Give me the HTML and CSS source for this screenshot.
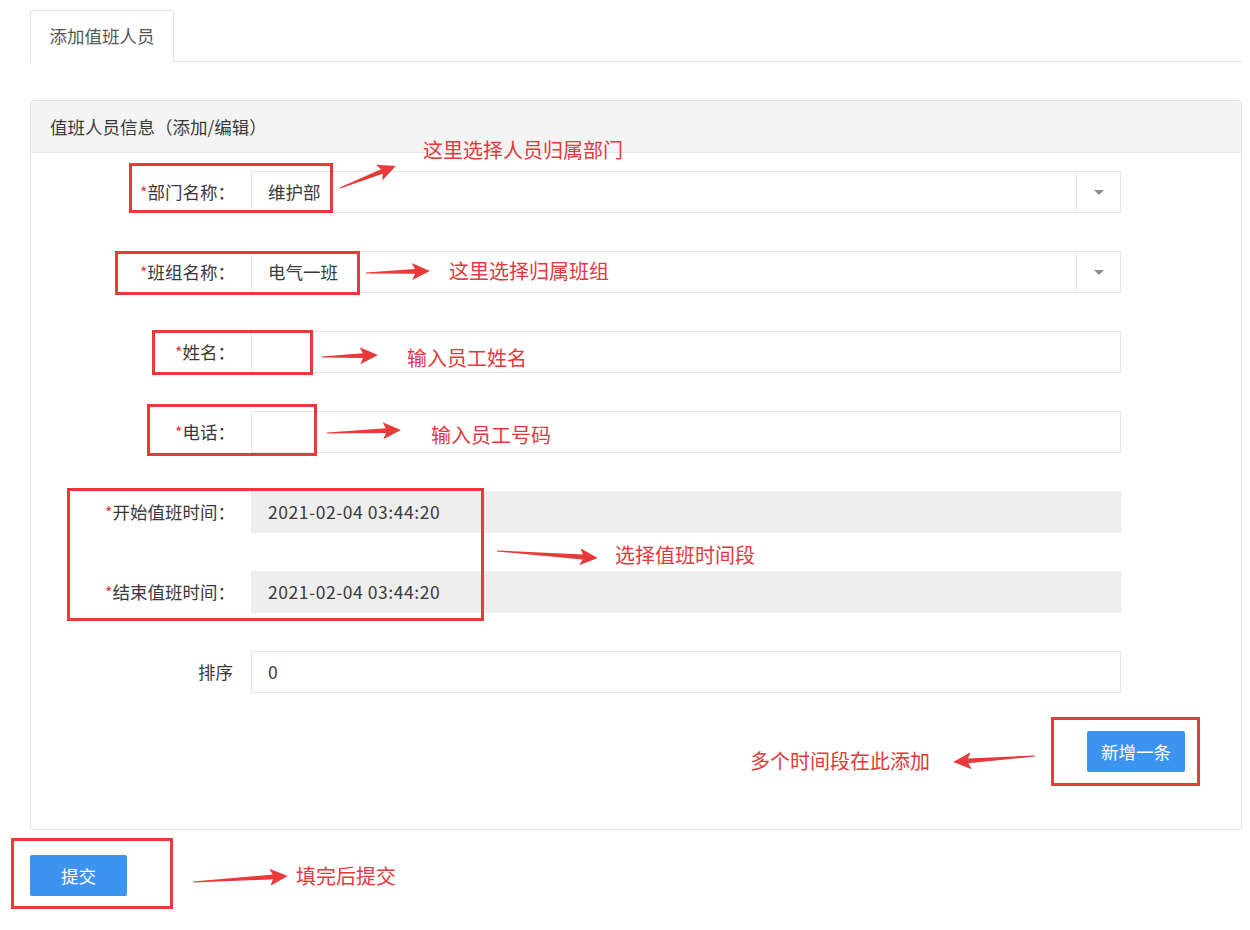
FILE: index.html
```html
<!DOCTYPE html>
<html lang="zh-CN">
<head>
<meta charset="utf-8">
<title>添加值班人员</title>
<link rel="stylesheet" href="styles.css">
</head>
<body>
<div class="page">
  <div class="tabs">
    <div class="tab">添加值班人员</div>
  </div>

  <div class="panel">
    <div class="panel-head">值班人员信息（添加/编辑）</div>
    <div class="panel-body">
      <div class="row">
        <div class="lbl"><span class="req">*</span>部门名称：</div>
        <div class="field select"><span class="val">维护部</span><span class="caret-box"><span class="caret"></span></span></div>
      </div>
      <div class="row">
        <div class="lbl"><span class="req">*</span>班组名称：</div>
        <div class="field select"><span class="val">电气一班</span><span class="caret-box"><span class="caret"></span></span></div>
      </div>
      <div class="row">
        <div class="lbl"><span class="req">*</span>姓名：</div>
        <div class="field"><span class="val"></span></div>
      </div>
      <div class="row">
        <div class="lbl"><span class="req">*</span>电话：</div>
        <div class="field"><span class="val"></span></div>
      </div>
      <div class="row">
        <div class="lbl"><span class="req">*</span>开始值班时间：</div>
        <div class="field readonly"><span class="val val-date">2021-02-04 03:44:20</span></div>
      </div>
      <div class="row">
        <div class="lbl"><span class="req">*</span>结束值班时间：</div>
        <div class="field readonly"><span class="val val-date">2021-02-04 03:44:20</span></div>
      </div>
      <div class="row">
        <div class="lbl lbl-plain">排序</div>
        <div class="field"><span class="val">0</span></div>
      </div>
      <div class="actions">
        <button class="btn btn-add">新增一条</button>
      </div>
    </div>
  </div>

  <div class="submit-row">
    <button class="btn btn-submit">提交</button>
  </div>

  <div class="notes">
    <div class="box box1"></div>
    <div class="box box2"></div>
    <div class="box box3"></div>
    <div class="box box4"></div>
    <div class="box box5"></div>
    <div class="box box6"></div>
    <div class="box box7"></div>

    <div class="note note1">这里选择人员归属部门</div>
    <div class="note note2">这里选择归属班组</div>
    <div class="note note3">输入员工姓名</div>
    <div class="note note4">输入员工号码</div>
    <div class="note note5">选择值班时间段</div>
    <div class="note note6">多个时间段在此添加</div>
    <div class="note note7">填完后提交</div>

    <svg class="arrows" width="1250" height="930" viewBox="0 0 1250 930">
      <g fill="#e8393b">
        <path transform="translate(340,188) rotate(-21.4)" d="M0,-0.6 L45,-2.4 L42,-8.5 L60,0 L42,8.5 L45,2.4 L0,0.6 Z"/>
        <path transform="translate(366,273) rotate(-1.8)" d="M0,-0.6 L49,-2.4 L46,-8.5 L64,0 L46,8.5 L49,2.4 L0,0.6 Z"/>
        <path transform="translate(322,357) rotate(-2)" d="M0,-0.6 L41,-2.4 L38,-8.5 L56,0 L38,8.5 L41,2.4 L0,0.6 Z"/>
        <path transform="translate(327,433) rotate(-2.3)" d="M0,-0.6 L59,-2.4 L56,-8.5 L74,0 L56,8.5 L59,2.4 L0,0.6 Z"/>
        <path transform="translate(497,551) rotate(4)" d="M0,-0.6 L86,-2.4 L83,-8.5 L101,0 L83,8.5 L86,2.4 L0,0.6 Z"/>
        <path transform="translate(1035,756) rotate(175.8)" d="M0,-0.6 L67,-2.4 L64,-8.5 L82,0 L64,8.5 L67,2.4 L0,0.6 Z"/>
        <path transform="translate(193,882) rotate(-3.6)" d="M0,-0.6 L80,-2.4 L77,-8.5 L95,0 L77,8.5 L80,2.4 L0,0.6 Z"/>
      </g>
    </svg>
  </div>
</div>
</body>
</html>
```

FILE: styles.css
```css
* { box-sizing: border-box; }

html, body {
  margin: 0;
  padding: 0;
  background: #ffffff;
}

body {
  font-family: "Noto Sans CJK SC", "Noto Sans", "Liberation Sans", sans-serif;
  color: #333333;
  font-size: 17px;
}

.page {
  position: relative;
  width: 1250px;
  height: 930px;
  padding: 10px 8px 0 30px;
}

/* tabs */
.tabs {
  display: flex;
  border-bottom: 1px solid #e2e2e2;
  height: 52px;
}

.tab {
  width: 144px;
  height: 52px;
  border: 1px solid #e2e2e2;
  border-bottom: none;
  border-radius: 3px 3px 0 0;
  background: #ffffff;
  color: #555555;
  font-size: 17.5px;
  line-height: 50px;
  text-align: center;
  margin-bottom: -1px;
}

/* panel */
.panel {
  margin-top: 38px;
  border: 1px solid #e2e2e2;
  border-radius: 3px;
}

.panel-head {
  height: 52px;
  background: #f4f4f4;
  border-bottom: 1px solid #e6e6e6;
  padding-left: 19px;
  font-size: 17.5px;
  line-height: 51px;
  color: #383838;
}

.panel-body {
  padding: 18px 0 57px 0;
}

.row {
  display: flex;
  align-items: center;
  height: 42px;
  margin-bottom: 38px;
}

.lbl {
  width: 220px;
  padding-right: 16px;
  text-align: right;
  font-size: 17.5px;
  line-height: 42px;
  color: #383838;
  white-space: nowrap;
}

.lbl-plain {
  padding-right: 18px;
}

.req {
  color: #e4393c;
  font-size: 16px;
}

.field {
  display: flex;
  align-items: center;
  width: 870px;
  height: 42px;
  border: 1px solid #e6e6e6;
  background: #ffffff;
}

.field.readonly {
  background: #eeeeee;
  border-color: #eeeeee;
}

.val {
  flex: 1;
  padding-left: 16px;
  font-size: 17.5px;
  line-height: 40px;
  color: #3a3a3a;
}

.val-date {
  letter-spacing: 0.55px;
}

.caret-box {
  width: 44px;
  height: 40px;
  border-left: 1px solid #e6e6e6;
  display: flex;
  align-items: center;
  justify-content: center;
}

.caret {
  width: 0;
  height: 0;
  border-left: 5px solid transparent;
  border-right: 5px solid transparent;
  border-top: 5px solid #8e8e8e;
}

.actions {
  display: flex;
  justify-content: flex-end;
  padding-right: 56px;
}

.btn {
  border: none;
  border-radius: 2px;
  background: #3d94f0;
  color: #ffffff;
  font-family: "Noto Sans CJK SC", "Noto Sans", sans-serif;
  font-size: 17.5px;
  cursor: pointer;
  padding: 0;
}

.btn-add {
  width: 98px;
  height: 41px;
}

.submit-row {
  margin-top: 25px;
}

.btn-submit {
  width: 97px;
  height: 41px;
}

/* annotations overlay */
.notes {
  position: absolute;
  left: 0;
  top: 0;
  width: 1250px;
  height: 930px;
  pointer-events: none;
}

.arrows {
  position: absolute;
  left: 0;
  top: 0;
}

.box {
  position: absolute;
  border: 3px solid #e8393b;
}

.box1 { left: 129px; top: 163px; width: 204px; height: 50px; }
.box2 { left: 115px; top: 251px; width: 245px; height: 44px; }
.box3 { left: 152px; top: 330px; width: 161px; height: 45px; }
.box4 { left: 147px; top: 404px; width: 170px; height: 52px; }
.box5 { left: 67px;  top: 488px; width: 417px; height: 133px; }
.box6 { left: 1051px; top: 717px; width: 149px; height: 69px; }
.box7 { left: 11px;  top: 838px; width: 162px; height: 71px; }

.note {
  position: absolute;
  color: #e5383b;
  font-size: 20px;
  line-height: 24px;
  white-space: nowrap;
}

.note1 { left: 423px; top: 138px; }
.note2 { left: 449px; top: 259px; }
.note3 { left: 407px; top: 346px; }
.note4 { left: 431px; top: 423px; }
.note5 { left: 615px; top: 543px; }
.note6 { left: 750px; top: 749px; }
.note7 { left: 296px; top: 864px; }
```
